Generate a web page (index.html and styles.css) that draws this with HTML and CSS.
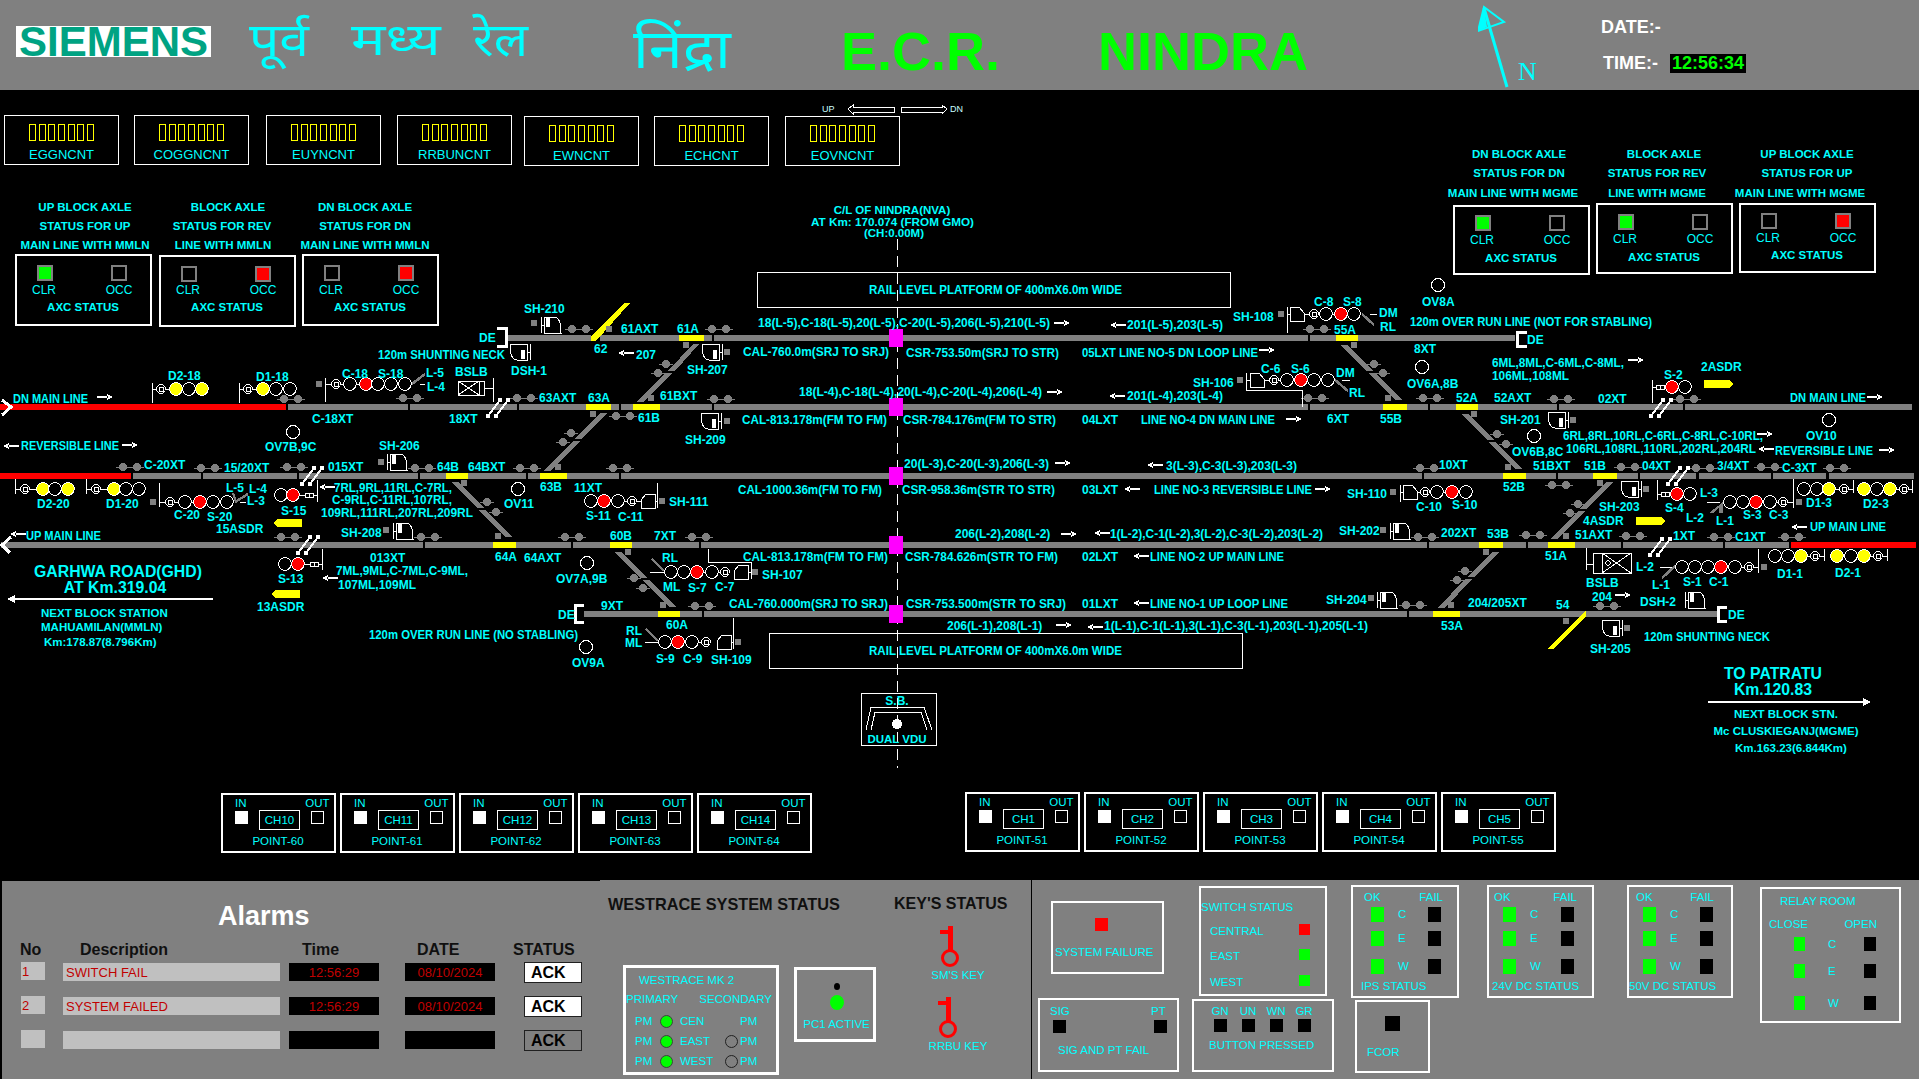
FILE: index.html
```html
<!DOCTYPE html>
<html lang="en">
<head>
    <meta charset="UTF-8">
    <title>E.C.R. NINDRA</title>
    <link rel="stylesheet" href="styles.css">
</head>
<body>
<header class="head">
    <div class="logo">SIEMENS</div>
    <div class="hi hi-1" lang="hi">पूर्व</div>
    <div class="hi hi-2" lang="hi">मध्य</div>
    <div class="hi hi-3" lang="hi">रेल</div>
    <div class="hi hi-4" lang="hi">निंद्रा</div>
    <div class="big big-1">E.C.R.</div>
    <div class="big big-2">NINDRA</div>
    <svg class="north" width="60" height="90" viewBox="0 0 60 90">
        <path class="n-line" d="M29 87L6 8"/>
        <path class="n-head" d="M6 7L26 22L0 31Z"/>
        <path class="n-fill" d="M6 7L9 27L0 31Z"/>
        <text class="n-text" x="40" y="80">N</text>
    </svg>
    <div class="clockbox">
        <div class="date">DATE:-</div>
        <div class="timerow"><span>TIME:-</span><span class="clock">12:56:34</span></div>
    </div>
</header>

<main class="yard">
    <svg class="plan" width="1919" height="790" viewBox="0 90 1919 790">
        <defs>
            <g id="ax"><path class="gl" d="M-7 0H7"/><circle class="gf" r="4"/></g>
            <circle id="dot" class="gf" r="3.5"/>
            <circle id="bigdot" class="gf" r="3.5"/>
            <g id="xo"><path class="wl2" d="M-10 9L2-7M-2 9L10-7"/><circle class="wf" cx="-10" cy="9" r="2.4"/><circle class="wf" cx="-2" cy="9" r="2.4"/><circle class="wf" cx="2" cy="-7" r="2.4"/><circle class="wf" cx="10" cy="-7" r="2.4"/></g>
            <circle id="l" class="lamp" r="6.3"/>
            <circle id="ly" class="lamp yel" r="6.3"/>
            <circle id="lr" class="lamp red" r="6.3"/>
            <circle id="ov" class="lamp" r="6.5"/>
            <g id="mk"><circle class="lamp" r="4.3"/><rect class="wl" x="-1.5" y="-2" width="3.5" height="4"/></g>
            <g id="bb"><rect class="lamp" x="-4" y="-2" width="4" height="4"/><rect class="lamp" x="0" y="-2" width="4" height="4"/></g>
            <g id="sh"><path class="wl" d="M0-8V8M0 0H3M3-8H13Q20-8 20 8H3Z"/><rect class="wf" x="5" y="-7" width="4" height="9"/></g>
            <path id="ho" class="wl lamp" d="M-3 0H0M0-7H9L14-1V7H0Z"/>
            <g id="ar"><path class="wl2" d="M-8 0H2"/><path class="wf" d="M1-3.5L8 0L1 3.5L3 0Z"/></g>
            <g id="al"><path class="wl2" d="M8 0H-2"/><path class="wf" d="M-1-3.5L-8 0L-1 3.5L-3 0Z"/></g>
        </defs>

        <!-- direction marker -->
        <text class="tiny" x="822" y="112">UP</text>
        <path class="wl" d="M848 109L853 105V107H894V112H853V114Z"/>
        <path class="wl" d="M901 107H942V105L947 109L942 114V112H901Z"/>
        <text class="tiny" x="950" y="112">DN</text>

        <!-- tracks -->
        <g class="gf">
            <rect x="507" y="335" width="84" height="6"/><rect x="600" y="335" width="112" height="6"/><rect x="714" y="335" width="594" height="6"/><rect x="1310" y="335" width="205" height="6"/>
            <rect x="288" y="404" width="120" height="6"/><rect x="410" y="404" width="107" height="6"/><rect x="519" y="404" width="100" height="6"/><rect x="621" y="404" width="91" height="6"/><rect x="714" y="404" width="594" height="6"/><rect x="1310" y="404" width="118" height="6"/><rect x="1430" y="404" width="127" height="6"/><rect x="1559" y="404" width="124" height="6"/><rect x="1685" y="404" width="227" height="6"/>
            <rect x="133" y="473" width="68" height="6"/><rect x="203" y="473" width="94" height="6"/><rect x="299" y="473" width="119" height="6"/><rect x="420" y="473" width="106" height="6"/><rect x="528" y="473" width="91" height="6"/><rect x="621" y="473" width="801" height="6"/><rect x="1424" y="473" width="132" height="6"/><rect x="1558" y="473" width="80" height="6"/><rect x="1640" y="473" width="56" height="6"/><rect x="1699" y="473" width="72" height="6"/><rect x="1773" y="473" width="53" height="6"/><rect x="1829" y="473" width="85" height="6"/>
            <rect x="1" y="542" width="422" height="6"/><rect x="425" y="542" width="146" height="6"/><rect x="573" y="542" width="126" height="6"/><rect x="701" y="542" width="726" height="6"/><rect x="1429" y="542" width="97" height="6"/><rect x="1528" y="542" width="93" height="6"/><rect x="1623" y="542" width="100" height="6"/><rect x="1725" y="542" width="64" height="6"/>
            <rect x="584" y="611" width="118" height="6"/><rect x="704" y="611" width="703" height="6"/><rect x="1409" y="611" width="308" height="6"/>
            <!-- crossovers -->
            <path d="M693 344H699L675 371H668Z"/><path d="M666 373H673L643 402H636Z"/>
            <path d="M600 413H607L582 439H575Z"/><path d="M573 441H580L551 471H544Z"/>
            <path d="M452 482H459L484 508H477Z"/><path d="M479 510H486L512 537H505Z"/>
            <path d="M615 552H622L647 578H640Z"/><path d="M642 580H649L677 607H670Z"/>
            <path d="M1341 345H1348L1373 371H1366Z"/><path d="M1368 373H1375L1402 400H1395Z"/>
            <path d="M1461 414H1468L1494 440H1487Z"/><path d="M1489 442H1496L1522 469H1515Z"/>
            <path d="M1606 482H1613L1587 509H1580Z"/><path d="M1578 511H1585L1558 539H1551Z"/>
            <path d="M1493 552H1500L1474 577H1467Z"/><path d="M1465 579H1472L1445 608H1438Z"/>
        </g>
        <g class="redf">
            <rect x="0" y="404" width="286" height="6"/><rect x="0" y="473" width="131" height="6"/><rect x="1791" y="542" width="125" height="6"/>
        </g>
        <g class="yelf">
            <rect x="679" y="335" width="25" height="6"/><rect x="1336" y="335" width="22" height="6"/>
            <rect x="586" y="404" width="25" height="6"/><rect x="633" y="404" width="27" height="6"/><rect x="1383" y="404" width="24" height="6"/><rect x="1456" y="404" width="22" height="6"/>
            <rect x="446" y="473" width="22" height="6"/><rect x="540" y="473" width="27" height="6"/><rect x="1503" y="473" width="23" height="6"/><rect x="1593" y="473" width="24" height="6"/>
            <rect x="493" y="542" width="23" height="6"/><rect x="610" y="542" width="22" height="6"/><rect x="1479" y="542" width="24" height="6"/><rect x="1548" y="542" width="27" height="6"/>
            <rect x="658" y="611" width="22" height="6"/><rect x="1433" y="611" width="27" height="6"/>
            <path d="M591 341V336L624 303H630L596 341Z"/>
            <path d="M1586 611V617L1553 649H1547Z"/>
            <path d="M1704 380H1730L1733 384L1730 388H1704Z"/>
            <path d="M1636 517H1662L1665 521L1662 525H1636Z"/>
            <path d="M302 519H277L274 523L277 527H302Z"/>
            <path d="M300 590H275L272 594L275 598H300Z"/>
        </g>
        <!-- dead ends and line ends -->
        <path class="wl3" d="M497 328H506V346H497M584 605H575V622H584M1527 332H1517V346H1527M1727 607H1718V621H1727"/>
        <path class="wl3" d="M2 400L11 407L2 415M11 537L2 545L10 553"/>

        <!-- centre line and platforms -->
        <path class="dash" d="M897 239V768"/>
        <rect class="wl" x="757.5" y="272.5" width="473" height="35"/>
        <rect class="wl" x="769.5" y="633.5" width="473" height="35"/>
        <g class="magf">
            <rect x="889" y="329" width="14" height="18"/><rect x="889" y="398" width="14" height="18"/><rect x="889" y="467" width="14" height="18"/><rect x="889" y="536" width="14" height="18"/><rect x="889" y="605" width="14" height="18"/>
        </g>

        <!-- axle counters -->
        <use href="#ax" x="284" y="399"/><use href="#ax" x="298" y="399"/><use href="#ax" x="403" y="398"/><use href="#ax" x="417" y="398"/>
        <use href="#ax" x="572" y="329"/><use href="#ax" x="586" y="329"/><use href="#ax" x="712" y="329"/><use href="#ax" x="726" y="329"/>
        <use href="#ax" x="517" y="398"/><use href="#ax" x="531" y="398"/><use href="#ax" x="714" y="399"/><use href="#ax" x="728" y="399"/>
        <use href="#ax" x="616" y="416"/><use href="#ax" x="630" y="416"/><use href="#ax" x="666" y="364"/><use href="#ax" x="658" y="373"/>
        <use href="#ax" x="571" y="433"/><use href="#ax" x="563" y="442"/><use href="#ax" x="1310" y="329"/><use href="#ax" x="1324" y="329"/>
        <use href="#ax" x="1308" y="398"/><use href="#ax" x="1322" y="398"/><use href="#ax" x="1374" y="364"/><use href="#ax" x="1383" y="373"/>
        <use href="#ax" x="1423" y="398"/><use href="#ax" x="1437" y="398"/><use href="#ax" x="1554" y="399"/><use href="#ax" x="1568" y="399"/>
        <use href="#ax" x="1680" y="399"/><use href="#ax" x="1694" y="399"/><use href="#ax" x="1497" y="434"/><use href="#ax" x="1506" y="444"/>
        <use href="#ax" x="123" y="467"/><use href="#ax" x="137" y="467"/><use href="#ax" x="201" y="468"/><use href="#ax" x="215" y="468"/>
        <use href="#ax" x="287" y="467"/><use href="#ax" x="301" y="467"/><use href="#ax" x="415" y="468"/><use href="#ax" x="429" y="468"/>
        <use href="#ax" x="520" y="468"/><use href="#ax" x="534" y="468"/><use href="#ax" x="613" y="468"/><use href="#ax" x="627" y="468"/>
        <use href="#ax" x="487" y="502"/><use href="#ax" x="496" y="512"/><use href="#ax" x="281" y="537"/><use href="#ax" x="295" y="537"/>
        <use href="#ax" x="421" y="537"/><use href="#ax" x="435" y="537"/><use href="#ax" x="565" y="537"/><use href="#ax" x="579" y="537"/>
        <use href="#ax" x="692" y="537"/><use href="#ax" x="706" y="537"/><use href="#ax" x="634" y="578"/><use href="#ax" x="643" y="588"/>
        <use href="#ax" x="695" y="606"/><use href="#ax" x="709" y="606"/><use href="#ax" x="1420" y="468"/><use href="#ax" x="1434" y="468"/>
        <use href="#ax" x="1418" y="537"/><use href="#ax" x="1432" y="537"/><use href="#ax" x="1406" y="605"/><use href="#ax" x="1420" y="605"/>
        <use href="#ax" x="1621" y="467"/><use href="#ax" x="1635" y="467"/><use href="#ax" x="1696" y="468"/><use href="#ax" x="1710" y="468"/>
        <use href="#ax" x="1761" y="467"/><use href="#ax" x="1775" y="467"/><use href="#ax" x="1830" y="468"/><use href="#ax" x="1844" y="468"/>
        <use href="#ax" x="1552" y="485"/><use href="#ax" x="1566" y="485"/><use href="#ax" x="1578" y="504"/><use href="#ax" x="1570" y="513"/>
        <use href="#ax" x="1526" y="535"/><use href="#ax" x="1540" y="535"/><use href="#ax" x="1626" y="536"/><use href="#ax" x="1640" y="536"/>
        <use href="#ax" x="1714" y="537"/><use href="#ax" x="1728" y="537"/><use href="#ax" x="1785" y="537"/><use href="#ax" x="1799" y="537"/>
        <use href="#ax" x="1465" y="571"/><use href="#ax" x="1457" y="580"/><use href="#ax" x="1600" y="606"/><use href="#ax" x="1614" y="606"/>
        <use href="#dot" x="609" y="329"/><use href="#dot" x="686" y="345"/><use href="#dot" x="651" y="398"/><use href="#dot" x="593" y="414"/>
        <use href="#dot" x="1354" y="345"/><use href="#dot" x="1388" y="398"/><use href="#dot" x="1474" y="414"/><use href="#dot" x="558" y="467"/>
        <use href="#dot" x="464" y="483"/><use href="#dot" x="498" y="536"/><use href="#dot" x="628" y="552"/><use href="#dot" x="663" y="605"/>
        <use href="#dot" x="1508" y="467"/><use href="#dot" x="1600" y="483"/><use href="#dot" x="1566" y="536"/><use href="#dot" x="1486" y="552"/>
        <use href="#dot" x="1451" y="605"/><use href="#dot" x="1566" y="621"/>

        <!-- point switches -->
        <use href="#xo" x="498" y="407"/><use href="#xo" x="312" y="475"/><use href="#xo" x="308" y="544"/>
        <use href="#xo" x="1661" y="407"/><use href="#xo" x="1678" y="475"/><use href="#xo" x="1660" y="546"/>

        <!-- shunt signals -->
        <use href="#sh" transform="translate(541,325)"/><use href="#bigdot" x="534" y="323"/>
        <use href="#sh" transform="translate(530,352) scale(-1,-1)"/>
        <use href="#sh" transform="translate(722,352) scale(-1,-1)"/><use href="#bigdot" x="727" y="352"/>
        <use href="#sh" transform="translate(721,421) scale(-1,-1)"/><use href="#bigdot" x="727" y="421"/>
        <use href="#sh" transform="translate(387,462)"/><use href="#bigdot" x="381" y="462"/>
        <use href="#sh" transform="translate(393,531)"/><use href="#bigdot" x="386" y="530"/>
        <use href="#sh" transform="translate(1390,531)"/><use href="#bigdot" x="1383" y="530"/>
        <use href="#sh" transform="translate(1377,600)"/><use href="#bigdot" x="1371" y="598"/>
        <use href="#sh" transform="translate(1641,489) scale(-1,-1)"/><use href="#bigdot" x="1646" y="489"/>
        <use href="#sh" transform="translate(1568,420) scale(-1,-1)"/><use href="#bigdot" x="1573" y="420"/>
        <use href="#sh" transform="translate(1622,628) scale(-1,-1)"/><use href="#bigdot" x="1627" y="628"/>
        <use href="#sh" transform="translate(1685,600)"/>

        <!-- running signals, west side -->
        <path class="wl" d="M152 383V403M152 389H202"/><use href="#mk" x="161" y="389"/><use href="#ly" x="176" y="389"/><use href="#l" x="189" y="389"/><use href="#ly" x="202" y="389"/>
        <path class="wl" d="M239 383V403M239 389H290"/><use href="#mk" x="248" y="389"/><use href="#ly" x="263" y="389"/><use href="#l" x="276" y="389"/><use href="#l" x="290" y="389"/>
        <use href="#bigdot" x="319" y="384"/>
        <path class="wl" d="M325 378V402M325 384H405"/><use href="#mk" x="336" y="384"/><use href="#l" x="350" y="384"/><use href="#lr" x="366" y="384"/><use href="#l" x="378" y="384"/><use href="#l" x="391" y="384"/><use href="#l" x="405" y="384"/>
        <path class="gl2" d="M412 384L425 374"/><path class="wl" d="M420 384H425"/>
        <rect class="wl2 lamp" x="458" y="381" width="26" height="14"/><path class="wl" d="M458 381L479 395M458 395L479 381M479 381V395M484 388H493M493 378V402"/>
        <path class="wl" d="M15 479V494M15 489H68"/><use href="#mk" x="25" y="489"/><use href="#ly" x="43" y="489"/><use href="#l" x="55" y="489"/><use href="#ly" x="68" y="489"/>
        <path class="wl" d="M86 479V494M86 489H139"/><use href="#mk" x="96" y="489"/><use href="#ly" x="114" y="489"/><use href="#l" x="126" y="489"/><use href="#l" x="139" y="489"/>
        <use href="#bigdot" x="153" y="502"/>
        <path class="wl" d="M159 483V507M159 502H227"/><use href="#mk" x="170" y="502"/><use href="#l" x="185" y="502"/><use href="#lr" x="200" y="502"/><use href="#l" x="213" y="502"/><use href="#l" x="227" y="502"/>
        <path class="gl2" d="M235 502L248 494M233 493L236 502"/><path class="wl" d="M240 502H246"/>
        <path class="wl" d="M317 480V502M293 495H317"/><use href="#l" x="281" y="495"/><use href="#lr" x="293" y="495"/><use href="#bb" x="309" y="495"/>
        <path class="wl" d="M322 549V570M298 564H322"/><use href="#l" x="285" y="564"/><use href="#lr" x="298" y="564"/><use href="#bb" x="314" y="564"/>

        <!-- signals, centre -->
        <path class="wl" d="M657 483V508M591 501H657"/><use href="#l" x="591" y="501"/><use href="#lr" x="604" y="501"/><use href="#l" x="618" y="501"/><use href="#mk" x="632" y="501"/><use href="#ho" transform="translate(655,501) scale(-1,1)"/><use href="#bigdot" x="662" y="501"/>
        <path class="wl" d="M708 549V562H751V579M650 572H725"/><path class="gl2" d="M652 559L664 571"/><use href="#l" x="671" y="572"/><use href="#l" x="684" y="572"/><use href="#lr" x="697" y="572"/><use href="#l" x="712" y="572"/><use href="#mk" x="725" y="572"/><use href="#ho" transform="translate(748,572) scale(-1,1)"/><use href="#bigdot" x="755" y="572"/>
        <path class="wl" d="M733 618V649M645 642H706"/><path class="gl2" d="M646 629L658 641"/><use href="#l" x="665" y="642"/><use href="#lr" x="678" y="642"/><use href="#l" x="692" y="642"/><use href="#mk" x="706" y="642"/><use href="#ho" transform="translate(731,642) scale(-1,1)"/><use href="#bigdot" x="738" y="642"/>

        <!-- signals, east side -->
        <use href="#bigdot" x="1281" y="314"/>
        <path class="wl" d="M1287 307V333M1304 314H1354M1370 314H1377"/><path class="gl2" d="M1362 314L1374 325"/><use href="#ho" transform="translate(1290,314)"/><use href="#mk" x="1314" y="314"/><use href="#l" x="1326" y="314"/><use href="#lr" x="1341" y="314"/><use href="#l" x="1354" y="314"/>
        <use href="#bigdot" x="1240" y="380"/>
        <path class="wl" d="M1246 373V390H1302V407M1264 380H1328M1342 380H1350"/><path class="gl2" d="M1335 380L1348 391"/><use href="#ho" transform="translate(1250,380)"/><use href="#mk" x="1274" y="380"/><use href="#l" x="1287" y="380"/><use href="#lr" x="1301" y="380"/><use href="#l" x="1314" y="380"/><use href="#l" x="1328" y="380"/>
        <path class="wl" d="M1652 380V403M1652 387H1685"/><use href="#bb" x="1660" y="387"/><use href="#lr" x="1672" y="387"/><use href="#l" x="1685" y="387"/>
        <use href="#bigdot" x="1393" y="492"/>
        <path class="wl" d="M1400 485V502M1417 492H1466"/><use href="#ho" transform="translate(1403,492)"/><use href="#mk" x="1425" y="492"/><use href="#l" x="1437" y="492"/><use href="#lr" x="1452" y="492"/><use href="#l" x="1466" y="492"/>
        <path class="wl" d="M1657 480V500M1657 494H1690"/><use href="#bb" x="1665" y="494"/><use href="#lr" x="1677" y="494"/><use href="#l" x="1690" y="494"/>
        <path class="wl" d="M1793 479V508M1730 502H1793M1707 502H1720"/><path class="gf" d="M1709 513L1723 502V513H1719V508L1713 513Z"/><use href="#l" x="1730" y="502"/><use href="#l" x="1743" y="502"/><use href="#lr" x="1756" y="502"/><use href="#l" x="1770" y="502"/><use href="#mk" x="1783" y="502"/><use href="#bigdot" x="1799" y="502"/>
        <path class="wl" d="M1853 480V493M1804 489H1853"/><use href="#l" x="1804" y="489"/><use href="#l" x="1817" y="489"/><use href="#ly" x="1829" y="489"/><use href="#mk" x="1844" y="489"/>
        <path class="wl" d="M1912 480V493M1864 489H1912"/><use href="#ly" x="1864" y="489"/><use href="#l" x="1877" y="489"/><use href="#ly" x="1890" y="489"/><use href="#mk" x="1904" y="489"/>
        <path class="wl" d="M1824 549V561M1775 556H1824"/><use href="#l" x="1775" y="556"/><use href="#l" x="1788" y="556"/><use href="#ly" x="1801" y="556"/><use href="#mk" x="1815" y="556"/>
        <path class="wl" d="M1887 549V561M1837 556H1887"/><use href="#ly" x="1837" y="556"/><use href="#l" x="1851" y="556"/><use href="#ly" x="1864" y="556"/><use href="#mk" x="1878" y="556"/>
        <path class="wl" d="M1758 549V573M1660 567H1672M1682 567H1758"/><path class="gl2" d="M1662 578L1675 566"/><use href="#l" x="1682" y="567"/><use href="#l" x="1695" y="567"/><use href="#l" x="1708" y="567"/><use href="#lr" x="1721" y="567"/><use href="#l" x="1735" y="567"/><use href="#mk" x="1749" y="567"/><use href="#bigdot" x="1764" y="567"/>
        <path class="wl" d="M1586 548V570M1586 564H1593"/><rect class="wl2 lamp" x="1593" y="553" width="38" height="20"/><path class="wl" d="M1602 553V573M1602 553L1631 573M1602 573L1631 553M1605 563L1608 560L1611 563L1608 566Z"/>

        <!-- overlap circles -->
        <use href="#ov" x="293" y="432"/><use href="#ov" x="1438" y="285"/><use href="#ov" x="1422" y="367"/><use href="#ov" x="1534" y="436"/><use href="#ov" x="1829" y="420"/>
        <use href="#ov" x="518" y="489"/><use href="#ov" x="587" y="563"/><use href="#ov" x="586" y="647"/>

        <!-- direction arrows -->
        <use href="#ar" x="105" y="397"/><use href="#al" x="11" y="446"/><use href="#ar" x="130" y="445"/><use href="#al" x="626" y="353"/><use href="#ar" x="1062" y="323"/><use href="#ar" x="1055" y="392"/>
        <use href="#al" x="1118" y="325"/><use href="#ar" x="1267" y="350"/><use href="#al" x="1117" y="396"/><use href="#ar" x="1294" y="419"/><use href="#ar" x="1636" y="360"/><use href="#ar" x="1875" y="397"/>
        <use href="#ar" x="1765" y="434"/><use href="#al" x="1766" y="449"/><use href="#ar" x="1887" y="450"/><use href="#al" x="327" y="487"/><use href="#al" x="330" y="578"/><use href="#al" x="18" y="534"/>
        <use href="#ar" x="1063" y="463"/><use href="#al" x="1155" y="465"/><use href="#al" x="1132" y="489"/><use href="#ar" x="1323" y="489"/><use href="#ar" x="1069" y="534"/><use href="#al" x="1102" y="533"/>
        <use href="#al" x="1141" y="556"/><use href="#al" x="1141" y="603"/><use href="#ar" x="1064" y="625"/><use href="#al" x="1095" y="627"/><use href="#al" x="1799" y="527"/><use href="#ar" x="1623" y="595"/>
        <path class="wl2" d="M8 599H213M1708 702H1866"/><path class="wf" d="M7 599L15 595V603ZM1871 702L1863 698V706Z"/>

        <!-- sectional block -->
        <rect class="wl" x="861.5" y="693.5" width="75" height="52"/>
        <path class="wl" d="M866 730L871 707H924L932 730M871 730L875 712H921L927 730"/>
        <circle class="wf" cx="897" cy="724" r="5"/>

        <!-- axle counter status, MMLN side -->
        <g class="t s">
            <text class="m" x="85" y="211">UP BLOCK AXLE</text><text class="m" x="85" y="230">STATUS FOR UP</text><text class="m" x="85" y="249">MAIN LINE WITH MMLN</text>
            <text class="m" x="228" y="211">BLOCK AXLE</text><text class="m" x="222" y="230">STATUS FOR REV</text><text class="m" x="223" y="249">LINE WITH MMLN</text>
            <text class="m" x="365" y="211">DN BLOCK AXLE</text><text class="m" x="365" y="230">STATUS FOR DN</text><text class="m" x="365" y="249">MAIN LINE WITH MMLN</text>
            <text class="m" x="1519" y="158">DN BLOCK AXLE</text><text class="m" x="1519" y="177">STATUS FOR DN</text><text class="m" x="1513" y="197">MAIN LINE WITH MGME</text>
            <text class="m" x="1664" y="158">BLOCK AXLE</text><text class="m" x="1657" y="177">STATUS FOR REV</text><text class="m" x="1657" y="197">LINE WITH MGME</text>
            <text class="m" x="1807" y="158">UP BLOCK AXLE</text><text class="m" x="1807" y="177">STATUS FOR UP</text><text class="m" x="1800" y="197">MAIN LINE WITH MGME</text>
        </g>
        <g transform="translate(16,255)"><rect class="box" width="135" height="70"/><rect class="sq sq-g" x="22" y="11" width="14" height="14"/><rect class="sq" x="96" y="11" width="14" height="14"/><text class="r m" x="28" y="39">CLR</text><text class="r m" x="103" y="39">OCC</text><text class="t s m" x="67" y="56">AXC STATUS</text></g>
        <g transform="translate(160,256)"><rect class="box" width="135" height="70"/><rect class="sq" x="22" y="11" width="14" height="14"/><rect class="sq sq-r" x="96" y="11" width="14" height="14"/><text class="r m" x="28" y="38">CLR</text><text class="r m" x="103" y="38">OCC</text><text class="t s m" x="67" y="55">AXC STATUS</text></g>
        <g transform="translate(303,255)"><rect class="box" width="135" height="70"/><rect class="sq" x="22" y="11" width="14" height="14"/><rect class="sq sq-r" x="96" y="11" width="14" height="14"/><text class="r m" x="28" y="39">CLR</text><text class="r m" x="103" y="39">OCC</text><text class="t s m" x="67" y="56">AXC STATUS</text></g>
        <g transform="translate(1454,206)"><rect class="box" width="135" height="68"/><rect class="sq sq-g" x="22" y="10" width="14" height="14"/><rect class="sq" x="96" y="10" width="14" height="14"/><text class="r m" x="28" y="38">CLR</text><text class="r m" x="103" y="38">OCC</text><text class="t s m" x="67" y="56">AXC STATUS</text></g>
        <g transform="translate(1597,204)"><rect class="box" width="135" height="69"/><rect class="sq sq-g" x="22" y="11" width="14" height="14"/><rect class="sq" x="96" y="11" width="14" height="14"/><text class="r m" x="28" y="39">CLR</text><text class="r m" x="103" y="39">OCC</text><text class="t s m" x="67" y="57">AXC STATUS</text></g>
        <g transform="translate(1740,204)"><rect class="box" width="135" height="68"/><rect class="sq" x="22" y="10" width="14" height="14"/><rect class="sq sq-r" x="96" y="10" width="14" height="14"/><text class="r m" x="28" y="38">CLR</text><text class="r m" x="103" y="38">OCC</text><text class="t s m" x="67" y="55">AXC STATUS</text></g>

        <!-- yard labels -->
        <g class="t">
            <text x="378" y="359" textLength="127" lengthAdjust="spacingAndGlyphs">120m SHUNTING NECK</text><text x="168" y="380">D2-18</text><text x="256" y="381">D1-18</text><text x="342" y="378">C-18</text><text x="378" y="378">S-18</text>
            <text x="426" y="377">L-5</text><text x="427" y="391">L-4</text><text x="455" y="376">BSLB</text><text x="13" y="403" textLength="75" lengthAdjust="spacingAndGlyphs">DN MAIN LINE</text><text x="312" y="423">C-18XT</text><text x="449" y="423">18XT</text>
            <text x="265" y="451">OV7B,9C</text><text x="21" y="450" textLength="98" lengthAdjust="spacingAndGlyphs">REVERSIBLE LINE</text><text x="379" y="450">SH-206</text>
            <text class="s m" x="892" y="214">C/L OF NINDRA(NVA)</text><text class="s" x="811" y="226" textLength="163" lengthAdjust="spacingAndGlyphs">AT Km: 170.074 (FROM GMO)</text><text class="s m" x="894" y="237">(CH:0.00M)</text>
            <text x="869" y="294" textLength="253" lengthAdjust="spacingAndGlyphs">RAIL LEVEL PLATFORM OF 400mX6.0m WIDE</text><text x="869" y="655" textLength="253" lengthAdjust="spacingAndGlyphs">RAIL LEVEL PLATFORM OF 400mX6.0m WIDE</text>
            <text x="524" y="313">SH-210</text><text x="479" y="342">DE</text><text x="511" y="375">DSH-1</text><text x="621" y="333">61AXT</text><text x="677" y="333">61A</text><text x="594" y="353">62</text><text x="636" y="359">207</text>
            <text x="687" y="374">SH-207</text><text x="743" y="356" textLength="146" lengthAdjust="spacingAndGlyphs">CAL-760.0m(SRJ TO SRJ)</text><text x="906" y="357" textLength="153" lengthAdjust="spacingAndGlyphs">CSR-753.50m(SRJ TO STR)</text>
            <text x="539" y="402">63AXT</text><text x="588" y="402">63A</text><text x="660" y="400">61BXT</text><text x="638" y="422">61B</text><text x="685" y="444">SH-209</text>
            <text x="742" y="424" textLength="145" lengthAdjust="spacingAndGlyphs">CAL-813.178m(FM TO FM)</text><text x="903" y="424" textLength="153" lengthAdjust="spacingAndGlyphs">CSR-784.176m(FM TO STR)</text>
            <text x="758" y="327" textLength="292" lengthAdjust="spacingAndGlyphs">18(L-5),C-18(L-5),20(L-5),C-20(L-5),206(L-5),210(L-5)</text><text x="799" y="396" textLength="243" lengthAdjust="spacingAndGlyphs">18(L-4),C-18(L-4),20(L-4),C-20(L-4),206(L-4)</text>
            <text x="1127" y="329" textLength="96" lengthAdjust="spacingAndGlyphs">201(L-5),203(L-5)</text><text x="1082" y="357" textLength="176" lengthAdjust="spacingAndGlyphs">05LXT LINE NO-5 DN LOOP LINE</text><text x="1127" y="400" textLength="96" lengthAdjust="spacingAndGlyphs">201(L-4),203(L-4)</text><text x="1082" y="424">04LXT</text><text x="1141" y="424" textLength="134" lengthAdjust="spacingAndGlyphs">LINE NO-4 DN MAIN LINE</text>
            <text x="1233" y="321">SH-108</text><text x="1193" y="387">SH-106</text><text x="1314" y="306">C-8</text><text x="1343" y="306">S-8</text><text x="1379" y="317">DM</text><text x="1380" y="331">RL</text><text x="1334" y="334">55A</text>
            <text x="1261" y="373">C-6</text><text x="1291" y="373">S-6</text><text x="1336" y="377">DM</text><text x="1349" y="397">RL</text><text x="1327" y="423">6XT</text><text x="1380" y="423">55B</text><text x="1414" y="353">8XT</text>
            <text x="1422" y="306">OV8A</text><text x="1410" y="326" textLength="242" lengthAdjust="spacingAndGlyphs">120m OVER RUN LINE (NOT FOR STABLING)</text><text x="1407" y="388">OV6A,8B</text>
            <text x="1527" y="344">DE</text><text x="1492" y="367" textLength="132" lengthAdjust="spacingAndGlyphs">6ML,8ML,C-6ML,C-8ML,</text><text x="1492" y="380" textLength="77" lengthAdjust="spacingAndGlyphs">106ML,108ML</text><text x="1701" y="371">2ASDR</text><text x="1664" y="379">S-2</text>
            <text x="1456" y="402">52A</text><text x="1494" y="402">52AXT</text><text x="1598" y="403">02XT</text><text x="1790" y="402" textLength="76" lengthAdjust="spacingAndGlyphs">DN MAIN LINE</text><text x="1500" y="424">SH-201</text><text x="1512" y="456">OV6B,8C</text>
            <text x="1563" y="440" textLength="200" lengthAdjust="spacingAndGlyphs">6RL,8RL,10RL,C-6RL,C-8RL,C-10RL,</text><text x="1566" y="453" textLength="190" lengthAdjust="spacingAndGlyphs">106RL,108RL,110RL,202RL,204RL</text><text x="1775" y="455" textLength="98" lengthAdjust="spacingAndGlyphs">REVERSIBLE LINE</text><text x="1806" y="440">OV10</text>
            <text x="144" y="469">C-20XT</text><text x="224" y="472">15/20XT</text><text x="328" y="471">015XT</text><text x="437" y="471">64B</text><text x="468" y="471">64BXT</text>
            <text x="37" y="508">D2-20</text><text x="106" y="508">D1-20</text><text x="174" y="519">C-20</text><text x="207" y="521">S-20</text><text x="226" y="492">L-5</text><text x="249" y="493">L-4</text><text x="247" y="505">L-3</text><text x="281" y="515">S-15</text><text x="216" y="533">15ASDR</text>
            <text x="334" y="492" textLength="118" lengthAdjust="spacingAndGlyphs">7RL,9RL,11RL,C-7RL,</text><text x="332" y="504" textLength="120" lengthAdjust="spacingAndGlyphs">C-9RL,C-11RL,107RL,</text><text x="321" y="517" textLength="152" lengthAdjust="spacingAndGlyphs">109RL,111RL,207RL,209RL</text>
            <text x="341" y="537">SH-208</text><text x="370" y="562">013XT</text><text x="336" y="575" textLength="132" lengthAdjust="spacingAndGlyphs">7ML,9ML,C-7ML,C-9ML,</text><text x="338" y="589" textLength="78" lengthAdjust="spacingAndGlyphs">107ML,109ML</text><text x="278" y="583">S-13</text><text x="257" y="611">13ASDR</text><text x="26" y="540" textLength="75" lengthAdjust="spacingAndGlyphs">UP MAIN LINE</text>
            <text class="s m big-t" x="118" y="577">GARHWA ROAD(GHD)</text><text class="s m big-t" x="115" y="593">AT Km.319.04</text>
            <text class="s" x="41" y="617">NEXT BLOCK STATION</text><text class="s" x="41" y="631">MAHUAMILAN(MMLN)</text><text class="s" x="44" y="646">Km:178.87(8.796Km)</text>
            <text x="369" y="639" textLength="209" lengthAdjust="spacingAndGlyphs">120m OVER RUN LINE (NO STABLING)</text>
            <text x="504" y="508">OV11</text><text x="540" y="491">63B</text><text x="574" y="492">11XT</text><text x="586" y="520">S-11</text><text x="618" y="521">C-11</text><text x="669" y="506">SH-111</text><text x="610" y="540">60B</text><text x="654" y="540">7XT</text>
            <text x="495" y="561">64A</text><text x="524" y="562">64AXT</text><text x="556" y="583">OV7A,9B</text><text x="662" y="562">RL</text><text x="663" y="591">ML</text><text x="688" y="592">S-7</text><text x="715" y="591">C-7</text><text x="762" y="579">SH-107</text>
            <text x="743" y="561" textLength="145" lengthAdjust="spacingAndGlyphs">CAL-813.178m(FM TO FM)</text><text x="905" y="561" textLength="153" lengthAdjust="spacingAndGlyphs">CSR-784.626m(STR TO FM)</text><text x="738" y="494" textLength="144" lengthAdjust="spacingAndGlyphs">CAL-1000.36m(FM TO FM)</text><text x="902" y="494" textLength="153" lengthAdjust="spacingAndGlyphs">CSR-958.36m(STR TO STR)</text>
            <text x="601" y="610">9XT</text><text x="558" y="619">DE</text><text x="666" y="629">60A</text><text x="626" y="635">RL</text><text x="625" y="647">ML</text><text x="656" y="663">S-9</text><text x="683" y="663">C-9</text><text x="711" y="664">SH-109</text><text x="572" y="667">OV9A</text>
            <text x="729" y="608" textLength="159" lengthAdjust="spacingAndGlyphs">CAL-760.000m(SRJ TO SRJ)</text><text x="906" y="608" textLength="160" lengthAdjust="spacingAndGlyphs">CSR-753.500m(STR TO SRJ)</text>
            <text x="904" y="468" textLength="145" lengthAdjust="spacingAndGlyphs">20(L-3),C-20(L-3),206(L-3)</text><text x="955" y="538">206(L-2),208(L-2)</text><text x="947" y="630">206(L-1),208(L-1)</text>
            <text x="1166" y="470" textLength="131" lengthAdjust="spacingAndGlyphs">3(L-3),C-3(L-3),203(L-3)</text><text x="1082" y="494">03LXT</text><text x="1154" y="494" textLength="158" lengthAdjust="spacingAndGlyphs">LINE NO-3 REVERSIBLE LINE</text><text x="1347" y="498">SH-110</text><text x="1416" y="511">C-10</text><text x="1452" y="509">S-10</text><text x="1439" y="469">10XT</text>
            <text x="1110" y="538" textLength="213" lengthAdjust="spacingAndGlyphs">1(L-2),C-1(L-2),3(L-2),C-3(L-2),203(L-2)</text><text x="1339" y="535">SH-202</text><text x="1082" y="561">02LXT</text><text x="1150" y="561" textLength="134" lengthAdjust="spacingAndGlyphs">LINE NO-2 UP MAIN LINE</text>
            <text x="1082" y="608">01LXT</text><text x="1150" y="608" textLength="138" lengthAdjust="spacingAndGlyphs">LINE NO-1 UP LOOP LINE</text><text x="1326" y="604">SH-204</text><text x="1104" y="630" textLength="264" lengthAdjust="spacingAndGlyphs">1(L-1),C-1(L-1),3(L-1),C-3(L-1),203(L-1),205(L-1)</text>
            <text x="1533" y="470">51BXT</text><text x="1584" y="470">51B</text><text x="1642" y="470">04XT</text><text x="1717" y="470">3/4XT</text><text x="1782" y="472">C-3XT</text><text x="1503" y="491">52B</text><text x="1665" y="512">S-4</text><text x="1599" y="511">SH-203</text><text x="1583" y="525">4ASDR</text>
            <text x="1700" y="497">L-3</text><text x="1686" y="522">L-2</text><text x="1716" y="525">L-1</text><text x="1743" y="519">S-3</text><text x="1769" y="519">C-3</text><text x="1806" y="507">D1-3</text><text x="1863" y="508">D2-3</text><text x="1810" y="531" textLength="76" lengthAdjust="spacingAndGlyphs">UP MAIN LINE</text>
            <text x="1441" y="537">202XT</text><text x="1487" y="538">53B</text><text x="1575" y="539">51AXT</text><text x="1673" y="540">1XT</text><text x="1735" y="541">C1XT</text><text x="1545" y="560">51A</text><text x="1586" y="587">BSLB</text><text x="1636" y="571">L-2</text><text x="1652" y="589">L-1</text>
            <text x="1683" y="586">S-1</text><text x="1709" y="586">C-1</text><text x="1777" y="578">D1-1</text><text x="1835" y="577">D2-1</text><text x="1592" y="601">204</text><text x="1640" y="606">DSH-2</text><text x="1468" y="607">204/205XT</text><text x="1556" y="609">54</text><text x="1441" y="630">53A</text><text x="1728" y="619">DE</text>
            <text x="1590" y="653">SH-205</text><text x="1644" y="641" textLength="126" lengthAdjust="spacingAndGlyphs">120m SHUNTING NECK</text>
            <text class="s m big-t" x="1773" y="679">TO PATRATU</text><text class="s m big-t" x="1773" y="695">Km.120.83</text>
            <text class="s m" x="1786" y="718">NEXT BLOCK STN.</text><text class="s m" x="1786" y="735">Mc CLUSKIEGANJ(MGME)</text><text class="s m" x="1791" y="752">Km.163.23(6.844Km)</text>
            <text class="m" x="897" y="705">S.B.</text><text class="s m" x="897" y="743">DUAL VDU</text>
        </g>
    </svg>

    <section class="counters">
        <div class="counter"><div class="digits"><i></i><i></i><i></i><i></i><i></i><i></i><i></i></div><div class="cname">EGGNCNT</div></div>
        <div class="counter"><div class="digits"><i></i><i></i><i></i><i></i><i></i><i></i><i></i></div><div class="cname">COGGNCNT</div></div>
        <div class="counter nudge-2"><div class="digits"><i></i><i></i><i></i><i></i><i></i><i></i><i></i></div><div class="cname">EUYNCNT</div></div>
        <div class="counter nudge-1"><div class="digits"><i></i><i></i><i></i><i></i><i></i><i></i><i></i></div><div class="cname">RRBUNCNT</div></div>
        <div class="counter pull low"><div class="digits"><i></i><i></i><i></i><i></i><i></i><i></i><i></i></div><div class="cname">EWNCNT</div></div>
        <div class="counter low"><div class="digits"><i></i><i></i><i></i><i></i><i></i><i></i><i></i></div><div class="cname">ECHCNT</div></div>
        <div class="counter low nudge-1"><div class="digits"><i></i><i></i><i></i><i></i><i></i><i></i><i></i></div><div class="cname">EOVNCNT</div></div>
    </section>

    <section class="points">
        <div class="point"><span class="p-in">IN</span><span class="p-out">OUT</span><b class="sw on"></b><span class="ch">CH10</span><b class="sw off"></b><span class="pname">POINT-60</span></div>
        <div class="point"><span class="p-in">IN</span><span class="p-out">OUT</span><b class="sw on"></b><span class="ch">CH11</span><b class="sw off"></b><span class="pname">POINT-61</span></div>
        <div class="point"><span class="p-in">IN</span><span class="p-out">OUT</span><b class="sw on"></b><span class="ch">CH12</span><b class="sw off"></b><span class="pname">POINT-62</span></div>
        <div class="point"><span class="p-in">IN</span><span class="p-out">OUT</span><b class="sw on"></b><span class="ch">CH13</span><b class="sw off"></b><span class="pname">POINT-63</span></div>
        <div class="point"><span class="p-in">IN</span><span class="p-out">OUT</span><b class="sw on"></b><span class="ch">CH14</span><b class="sw off"></b><span class="pname">POINT-64</span></div>
        <div class="point pt-east"><span class="p-in">IN</span><span class="p-out">OUT</span><b class="sw on"></b><span class="ch">CH1</span><b class="sw off"></b><span class="pname">POINT-51</span></div>
        <div class="point up"><span class="p-in">IN</span><span class="p-out">OUT</span><b class="sw on"></b><span class="ch">CH2</span><b class="sw off"></b><span class="pname">POINT-52</span></div>
        <div class="point up"><span class="p-in">IN</span><span class="p-out">OUT</span><b class="sw on"></b><span class="ch">CH3</span><b class="sw off"></b><span class="pname">POINT-53</span></div>
        <div class="point up"><span class="p-in">IN</span><span class="p-out">OUT</span><b class="sw on"></b><span class="ch">CH4</span><b class="sw off"></b><span class="pname">POINT-54</span></div>
        <div class="point up"><span class="p-in">IN</span><span class="p-out">OUT</span><b class="sw on"></b><span class="ch">CH5</span><b class="sw off"></b><span class="pname">POINT-55</span></div>
    </section>
</main>

<footer class="foot">
    <section class="alarms">
        <h2 class="a-title">Alarms</h2>
        <div class="a-head"><span class="h-no">No</span><span class="h-desc">Description</span><span class="h-time">Time</span><span class="h-date">DATE</span><span>STATUS</span></div>
        <div class="a-grid">
            <div class="a-no">1</div><div class="a-desc">SWITCH FAIL</div><div class="a-time">12:56:29</div><div class="a-date">08/10/2024</div><button class="ack">ACK</button>
            <div class="a-no">2</div><div class="a-desc">SYSTEM FAILED</div><div class="a-time">12:56:29</div><div class="a-date">08/10/2024</div><button class="ack">ACK</button>
            <div class="a-no"></div><div class="a-desc"></div><div class="a-time"></div><div class="a-date"></div><button class="ack idle">ACK</button>
        </div>
    </section>

    <section class="system">
        <div class="westrace">
            <h3 class="sys-title">WESTRACE SYSTEM STATUS</h3>
            <div class="wr-boxes">
                <div class="wr-box">
                    <div class="wr-name">WESTRACE MK 2</div>
                    <div class="wr-cols"><span>PRIMARY</span><span>SECONDARY</span></div>
                    <div class="wr-row"><span>PM</span><i class="led"></i><span class="wr-site">CEN</span><span></span><span>PM</span></div>
                    <div class="wr-row"><span>PM</span><i class="led"></i><span class="wr-site">EAST</span><i class="led hollow"></i><span>PM</span></div>
                    <div class="wr-row"><span>PM</span><i class="led"></i><span class="wr-site">WEST</span><i class="led hollow"></i><span>PM</span></div>
                </div>
                <div class="pc-box">
                    <i class="pc-dot"></i><i class="pc-led"></i>
                    <div class="lbl">PC1 ACTIVE</div>
                </div>
            </div>
        </div>
        <div class="keys">
            <h3 class="sys-title">KEY'S STATUS</h3>
            <svg class="key" width="40" height="42" viewBox="0 0 40 42"><path class="key-p" d="M10 0H15V24H10ZM2 4H10V8H2Z"/><circle class="key-r" cx="12" cy="32" r="7.5"/></svg>
            <div class="lbl">SM'S KEY</div>
            <svg class="key key-2" width="40" height="42" viewBox="0 0 40 42"><path class="key-p" d="M10 0H15V24H10ZM2 4H10V8H2Z"/><circle class="key-r" cx="12" cy="32" r="7.5"/></svg>
            <div class="lbl">RRBU KEY</div>
        </div>
    </section>

    <section class="board">
        <div class="board-top">
            <div class="card c-fail"><i class="lamp-b red-b"></i><div class="lbl">SYSTEM FAILURE</div></div>
            <div class="card c-switch">
                <div class="lbl">SWITCH STATUS</div>
                <div class="sw-row"><span class="lbl">CENTRAL</span><i class="sw-lamp lr"></i></div>
                <div class="sw-row"><span class="lbl">EAST</span><i class="sw-lamp g"></i></div>
                <div class="sw-row"><span class="lbl">WEST</span><i class="sw-lamp g"></i></div>
            </div>
            <div class="card psu psu-ips">
                <div class="psu-head lbl"><span>OK</span><span>FAIL</span></div>
                <div class="psu-row"><i class="g"></i><span class="lbl">C</span><i class="k"></i></div>
                <div class="psu-row"><i class="g"></i><span class="lbl">E</span><i class="k"></i></div>
                <div class="psu-row"><i class="g"></i><span class="lbl">W</span><i class="k"></i></div>
                <div class="psu-foot lbl">IPS STATUS</div>
            </div>
            <div class="card psu psu-24">
                <div class="psu-head lbl"><span>OK</span><span>FAIL</span></div>
                <div class="psu-row"><i class="g"></i><span class="lbl">C</span><i class="k"></i></div>
                <div class="psu-row"><i class="g"></i><span class="lbl">E</span><i class="k"></i></div>
                <div class="psu-row"><i class="g"></i><span class="lbl">W</span><i class="k"></i></div>
                <div class="psu-foot lbl">24V DC STATUS</div>
            </div>
            <div class="card psu psu-50">
                <div class="psu-head lbl"><span>OK</span><span>FAIL</span></div>
                <div class="psu-row"><i class="g"></i><span class="lbl">C</span><i class="k"></i></div>
                <div class="psu-row"><i class="g"></i><span class="lbl">E</span><i class="k"></i></div>
                <div class="psu-row"><i class="g"></i><span class="lbl">W</span><i class="k"></i></div>
                <div class="psu-foot lbl">50V DC STATUS</div>
            </div>
            <div class="card c-relay">
                <div class="lbl relay-name">RELAY ROOM</div>
                <div class="relay-head lbl"><span>CLOSE</span><span>OPEN</span></div>
                <div class="relay-row"><i class="g"></i><span class="lbl">C</span><i class="k"></i></div>
                <div class="relay-row"><i class="g"></i><span class="lbl">E</span><i class="k"></i></div>
                <div class="relay-row"><i class="g"></i><span class="lbl">W</span><i class="k"></i></div>
            </div>
        </div>
        <div class="board-bottom">
            <div class="card c-sig">
                <div class="sig-cols">
                    <div class="sig-col"><span class="lbl">SIG</span><i class="k"></i></div>
                    <div class="sig-col"><span class="lbl">PT</span><i class="k"></i></div>
                </div>
                <div class="lbl sig-name">SIG AND PT FAIL</div>
            </div>
            <div class="card c-btn">
                <div class="btn-cols">
                    <div class="btn-col"><span class="lbl">GN</span><i class="k"></i></div>
                    <div class="btn-col"><span class="lbl">UN</span><i class="k"></i></div>
                    <div class="btn-col"><span class="lbl">WN</span><i class="k"></i></div>
                    <div class="btn-col"><span class="lbl">GR</span><i class="k"></i></div>
                </div>
                <div class="lbl btn-name">BUTTON PRESSED</div>
            </div>
            <div class="card c-fcor"><i class="k"></i><div class="lbl">FCOR</div></div>
        </div>
    </section>
</footer>
</body>
</html>
```

FILE: styles.css
```css
*{
    box-sizing: border-box;
}

html, body{
    margin: 0;
    padding: 0;
    background-color: #000000;
}

body{
    width: 1919px;
    height: 1079px;
    overflow: hidden;
    font-family: "Liberation Sans", Arial, sans-serif;
}

i, b{
    display: block;
}

h2, h3{
    margin: 0;
}

/* top bar */
.head{
    display: flex;
    align-items: flex-start;
    height: 90px;
    background-color: #808080;
}

.logo{
    width: 195px;
    height: 31px;
    margin: 26px 0 0 16px;
    background-color: #ffffff;
    color: #00a383;
    font-size: 42px;
    font-weight: bold;
    line-height: 32px;
    text-align: center;
    white-space: nowrap;
}

.hi{
    margin-top: 8px;
    color: #00ffff;
    font-family: "Noto Sans", "Noto Sans Devanagari", "DejaVu Sans", sans-serif;
    font-size: 46px;
    line-height: 60px;
    white-space: nowrap;
    transform-origin: left center;
}

.hi-1{ width: 57px; margin-left: 38px; transform: scaleX(1.16); }
.hi-2{ width: 93px; margin-left: 45px; font-size: 44px; transform: scaleX(1.31); }
.hi-3{ width: 57px; margin-left: 29px; transform: scaleX(1.1); }
.hi-4{ width: 100px; margin-left: 103px; margin-top: 17px; font-size: 54px; transform: scaleX(1.13); }

.big{
    margin-top: 20px;
    color: #00ff00;
    font-size: 54px;
    font-weight: bold;
    line-height: 62px;
    white-space: nowrap;
}

.big-1{ width: 160px; margin-left: 108px; }
.big-2{ width: 208px; margin-left: 97px; }

.north{
    margin-left: 172px;
}

.n-line{
    stroke: #00ffff;
    stroke-width: 3;
    fill: none;
}

.n-head{
    stroke: #00ffff;
    stroke-width: 2;
    fill: none;
}

.n-fill{
    fill: #00ffff;
}

.n-text{
    fill: #00ffff;
    font-family: "Liberation Serif", serif;
    font-size: 26px;
}

.clockbox{
    margin-left: 63px;
    color: #ffffff;
    font-size: 18px;
    font-weight: bold;
}

.date{
    margin-top: 17px;
    line-height: 20px;
}

.timerow{
    display: flex;
    align-items: center;
    gap: 12px;
    margin: 16px 0 0 2px;
}

.clock{
    width: 76px;
    height: 19px;
    background-color: #000000;
    color: #00ff00;
    line-height: 19px;
    text-align: center;
}

/* yard: the svg is the free canvas, panels sit on it */
.yard{
    position: relative;
    height: 790px;
}

.plan{
    position: absolute;
    top: 0;
    left: 0;
    shape-rendering: crispEdges;
}

.gf{ fill: #808080; }
.redf{ fill: #ff0000; }
.yelf{ fill: #ffff00; }
.magf{ fill: #ff00ff; }
.wf{ fill: #ffffff; }
.gl{ stroke: #808080; stroke-width: 1; fill: none; }
.gl2{ stroke: #808080; stroke-width: 2.5; fill: none; }
.wl{ stroke: #ffffff; stroke-width: 1; fill: none; }
.wl2{ stroke: #ffffff; stroke-width: 2; fill: none; }
.wl3{ stroke: #ffffff; stroke-width: 3; fill: none; }
.lamp{ stroke: #ffffff; stroke-width: 1; fill: #000000; }
.yel{ fill: #ffff00; }
.red{ fill: #ff0000; }
.dash{ stroke: #ffffff; stroke-width: 1; stroke-dasharray: 11 6; fill: none; }
.box{ stroke: #ffffff; stroke-width: 2; fill: none; }
.sq{ stroke: #808080; stroke-width: 1.5; fill: none; }
.sq-g{ fill: #00ff00; }
.sq-r{ fill: #ff0000; }

.t{
    fill: #00ffff;
    font-size: 12px;
    font-weight: bold;
}

.s{
    font-size: 11.5px;
}

.big-t{
    font-size: 15.8px;
}

.r{
    fill: #00ffff;
    font-size: 12px;
}

.m{
    text-anchor: middle;
}

.tiny{
    fill: #ccffff;
    font-size: 9px;
}

/* block counters */
.counters{
    position: relative;
    display: flex;
    align-items: flex-start;
    gap: 15px;
    padding: 25px 0 0 4px;
}

.counter{
    width: 115px;
    height: 50px;
    border: 1px solid #ffffff;
    text-align: center;
}

.nudge-2{ margin-left: 2px; }
.nudge-1{ margin-left: 1px; }
.pull{ margin-left: -3px; }
.low{ margin-top: 1px; }

.digits{
    display: flex;
    justify-content: center;
    gap: 2.6px;
    margin-top: 8px;
}

.digits i{
    width: 7px;
    height: 17px;
    border: 1px solid #ffff00;
}

.cname{
    margin-top: 6px;
    color: #00ffff;
    font-size: 13px;
    line-height: 15px;
}

/* point machines */
.points{
    position: relative;
    display: flex;
    align-items: flex-start;
    gap: 4px;
    margin: 627px 0 0 221px;
}

.point{
    display: grid;
    grid-template-columns: 13px 1fr 13px;
    grid-template-rows: 13px 21px 17px;
    column-gap: 11px;
    width: 115px;
    height: 60px;
    padding: 2px 10px 0 12px;
    border: 2px solid #ffffff;
    color: #00ffff;
    font-size: 11.5px;
    line-height: 13px;
}

.pt-east{
    margin-left: 149px;
    margin-top: -1px;
}

.up{
    margin-top: -1px;
}

.p-in{
    grid-column: 1;
    grid-row: 1;
}

.p-out{
    grid-column: 3;
    grid-row: 1;
    justify-self: center;
}

.sw{
    align-self: start;
    grid-row: 2;
    width: 13px;
    height: 13px;
    margin-top: 1px;
}

.sw.on{
    grid-column: 1;
    background-color: #ffffff;
}

.sw.off{
    grid-column: 3;
    border: 1px solid #ffffff;
}

.ch{
    grid-column: 2;
    grid-row: 2;
    height: 20px;
    border: 1px solid #ffffff;
    line-height: 18px;
    text-align: center;
}

.pname{
    grid-column: 1 / 4;
    grid-row: 3;
    align-self: end;
    padding-right: 3px;
    text-align: center;
}

/* bottom panel */
.foot{
    display: grid;
    grid-template-columns: 600px 431px 888px;
    height: 199px;
    background-color: #808080;
}

.alarms{
    border-left: 2px solid #000000;
    border-top: 1px solid #000000;
}

.a-title{
    margin: 20px 0 0 216px;
    color: #ffffff;
    font-size: 27px;
    line-height: 31px;
}

.a-head{
    display: flex;
    margin: 9px 0 0 18px;
    color: #101010;
    font-size: 16px;
    font-weight: bold;
    line-height: 18px;
}

.h-no{ width: 60px; }
.h-desc{ width: 222px; }
.h-time{ width: 115px; }
.h-date{ width: 96px; }

.a-grid{
    display: grid;
    grid-template-columns: 24px 235px 99px 116px 87px;
    grid-auto-rows: 18px;
    row-gap: 16px;
    margin: 3px 0 0 19px;
    color: #c00000;
    font-size: 13px;
    line-height: 20px;
}

.a-no{
    padding-left: 1px;
    background-color: #c0c0c0;
}

.a-desc{
    height: 18px;
    margin: 1px 0 0 18px;
    padding-left: 3px;
    background-color: #c0c0c0;
}

.a-time, .a-date{
    height: 18px;
    margin-top: 1px;
    background-color: #000000;
    text-align: center;
}

.a-time{ margin-left: 9px; }
.a-date{ margin-left: 26px; }

.ack{
    width: 58px;
    height: 21px;
    margin-left: 29px;
    padding: 0 0 0 6px;
    border: 1px solid #202020;
    border-radius: 0;
    background-color: #ffffff;
    color: #000000;
    font-family: inherit;
    font-size: 16px;
    font-weight: bold;
    line-height: 18px;
    text-align: left;
}

.ack.idle{
    background-color: #808080;
}

.system{
    display: flex;
}

.westrace{
    width: 285px;
}

.sys-title{
    margin-top: 15px;
    color: #101010;
    font-size: 16.3px;
    line-height: 18px;
    white-space: nowrap;
}

.westrace .sys-title{
    margin-left: 8px;
}

.keys .sys-title{
    align-self: flex-start;
    margin-left: 9px;
    font-size: 16px;
}

.wr-boxes{
    display: flex;
    align-items: flex-start;
    margin: 52px 0 0 23px;
    gap: 15px;
}

.lbl{
    color: #00ffff;
    font-size: 11.5px;
    font-weight: normal;
    line-height: 14px;
    white-space: nowrap;
}

.wr-box{
    width: 156px;
    height: 110px;
    padding-top: 5px;
    border: 3px solid #ffffff;
    color: #00ffff;
    font-size: 11.5px;
    line-height: 14px;
}

.wr-name{
    margin-left: 13px;
}

.wr-cols{
    display: flex;
    justify-content: space-between;
    margin-top: 5px;
    padding-right: 4px;
}

.wr-row{
    display: grid;
    grid-template-columns: 25px 14px 51px 15px auto;
    align-items: center;
    height: 14px;
    margin-top: 6px;
    padding-left: 9px;
}

.wr-cols + .wr-row{
    margin-top: 8px;
}

.wr-site{
    padding-left: 6px;
}

.led{
    width: 13px;
    height: 13px;
    border: 1px solid #404040;
    border-radius: 50%;
    background-color: #00ff00;
}

.led.hollow{
    background-color: transparent;
    border-color: #202020;
}

.pc-box{
    display: flex;
    flex-direction: column;
    align-items: center;
    width: 82px;
    height: 75px;
    margin-top: 2px;
    padding: 13px 0 0 3px;
    border: 3px solid #ffffff;
}

.pc-dot{
    width: 6px;
    height: 7px;
    border-radius: 50%;
    background-color: #000000;
}

.pc-led{
    width: 14px;
    height: 15px;
    margin-top: 5px;
    border-radius: 50%;
    background-color: #00ff00;
}

.pc-box .lbl{
    margin-top: 7px;
}

.keys{
    display: flex;
    flex-direction: column;
    align-items: center;
    width: 146px;
}

.key{
    margin-top: 13px;
}

.key-2{
    margin-top: 15px;
    margin-left: -5px;
}

.key-p{
    fill: #ff0000;
}

.key-r{
    fill: none;
    stroke: #ff0000;
    stroke-width: 3;
}

.board{
    border-left: 1px solid #000000;
}

.board-top{
    display: flex;
    align-items: flex-start;
    height: 118px;
}

.board-bottom{
    display: flex;
    align-items: flex-start;
}

.card{
    border: 2px solid #ffffff;
}

.g{ background-color: #00ff00; }
.k{ background-color: #000000; }
.lr{ background-color: #ff0000; }

.c-fail{
    width: 113px;
    height: 73px;
    margin: 21px 0 0 19px;
    padding: 15px 0 0 2px;
}

.lamp-b{
    width: 13px;
    height: 13px;
    margin: 0 0 14px 40px;
}

.red-b{
    background-color: #ff0000;
}

.c-switch{
    width: 128px;
    height: 110px;
    margin: 6px 0 0 35px;
    padding-top: 12px;
}

.sw-row{
    display: flex;
    align-items: center;
    justify-content: space-between;
    height: 14px;
    margin-top: 11px;
    padding: 0 15px 0 9px;
}

.sw-row:nth-child(2){
    margin-top: 8px;
}

.sw-row:last-child{
    margin-top: 12px;
}

.sw-row .lbl{
    padding-top: 4px;
}

.sw-lamp{
    width: 11px;
    height: 11px;
}

.psu{
    height: 113px;
    margin-top: 5px;
    padding-top: 3px;
}

.psu-ips{ width: 108px; margin-left: 24px; }
.psu-24{ width: 107px; margin-left: 28px; }
.psu-50{ width: 106px; margin-left: 33px; }

.psu-head{
    display: flex;
    justify-content: space-between;
    height: 14px;
}

.psu-ips .psu-head{ padding: 0 14px 0 11px; }
.psu-24 .psu-head{ padding: 0 15px 0 5px; }
.psu-50 .psu-head{ padding: 0 17px 0 7px; }

.psu-row{
    display: grid;
    grid-template-columns: 13px 1fr 13px;
    height: 13px;
    margin-top: 11px;
}

.psu-head + .psu-row{
    margin-top: 3px;
}

.psu-row:nth-child(4){
    margin-top: 15px;
}

.psu-row .lbl{
    padding-left: 14px;
    line-height: 15px;
}

.psu-ips .psu-row{ padding: 0 16px 0 18px; }
.psu-24 .psu-row{ padding: 0 18px 0 14px; }
.psu-50 .psu-row{ padding: 0 18px 0 14px; }

.psu-foot{
    margin-top: 7px;
}

.psu-ips .psu-foot{ padding-left: 8px; }
.psu-24 .psu-foot{ padding-left: 3px; }
.psu-50 .psu-foot{ padding-left: 0; }

.c-relay{
    width: 141px;
    height: 136px;
    margin: 7px 0 0 27px;
    padding-top: 5px;
}

.relay-name{
    margin-left: 18px;
}

.relay-head{
    display: flex;
    justify-content: space-between;
    margin-top: 9px;
    padding: 0 22px 0 7px;
}

.relay-row{
    display: grid;
    grid-template-columns: 11px 1fr 12px;
    height: 12px;
    margin-top: 15px;
    padding: 0 23px 0 32px;
}

.relay-head + .relay-row{
    margin-top: 6px;
}

.relay-row .lbl{
    padding-left: 23px;
}

.relay-row:last-child{
    margin-top: 20px;
}

.c-sig{
    width: 141px;
    height: 74px;
    margin-left: 6px;
    padding-top: 4px;
}

.sig-cols{
    display: flex;
    justify-content: space-between;
    padding: 0 10px 0 10px;
}

.sig-col{
    display: flex;
    flex-direction: column;
    gap: 2px;
}

.sig-col i{
    width: 13px;
    height: 13px;
    margin-left: 3px;
}

.sig-name{
    margin: 10px 0 0 18px;
}

.c-btn{
    width: 142px;
    height: 73px;
    margin: 1px 0 0 13px;
    padding: 3px 0 0 12px;
}

.btn-cols{
    display: flex;
}

.btn-col{
    display: flex;
    flex-direction: column;
    align-items: center;
    width: 28px;
    gap: 1px;
}

.btn-col i{
    width: 13px;
    height: 13px;
}

.btn-name{
    margin: 6px 0 0 3px;
}

.c-fcor{
    width: 75px;
    height: 73px;
    margin: 2px 0 0 21px;
    padding: 14px 0 0 10px;
}

.c-fcor i{
    width: 15px;
    height: 15px;
    margin: 0 0 14px 18px;
}
```
